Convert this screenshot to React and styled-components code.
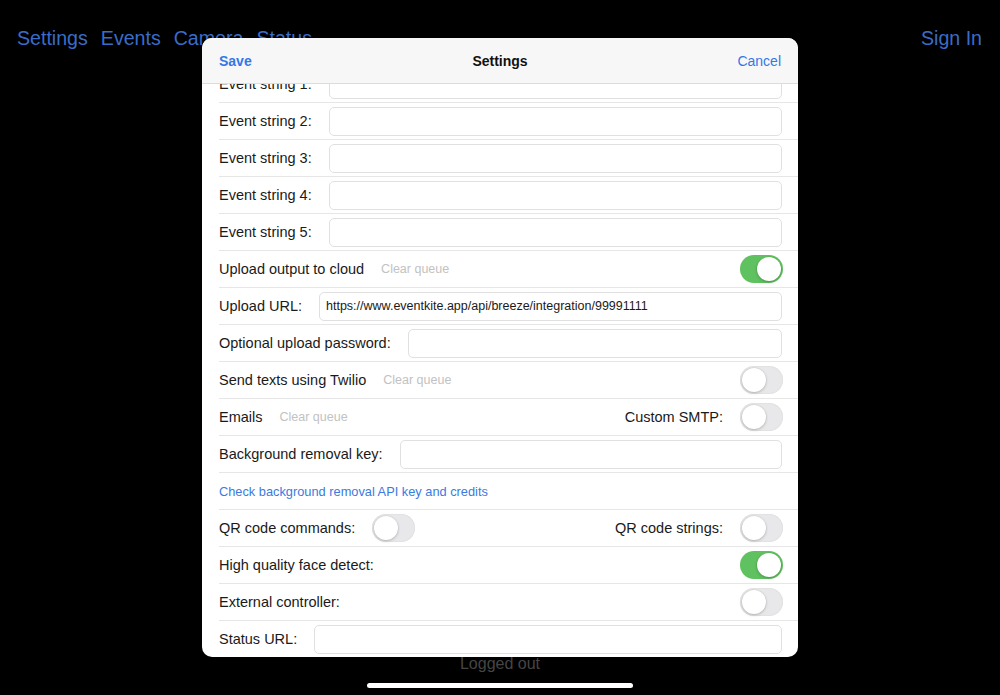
import React, { useLayoutEffect, useRef } from "react";
import styled, { createGlobalStyle } from "styled-components";

const Global = createGlobalStyle`
  html, body { margin: 0; padding: 0; background: #000; }
  body { font-family: "Liberation Sans", Arial, sans-serif; -webkit-font-smoothing: antialiased; }
  * { box-sizing: border-box; }
`;

const Page = styled.div`
  position: relative;
  width: 1000px;
  height: 695px;
  background: #000;
  display: flex;
  flex-direction: column;
  overflow: hidden;
`;

const Nav = styled.nav`
  display: flex;
  align-items: center;
  padding: 26px 18px 0 17px;
  height: 50px;
`;

const NavLink = styled.span`
  color: #3a6cc9;
  font-size: 19.6px;
  line-height: 24px;
  margin-right: ${(p) => (p.$last ? "0" : "13px")};
`;

const NavSpacer = styled.div`
  flex: 1;
`;

const Filler = styled.div`
  flex: 1;
`;

const Status = styled.div`
  text-align: center;
  color: #454545;
  font-size: 16px;
  line-height: 20px;
`;

const HomeBar = styled.div`
  align-self: center;
  width: 266px;
  height: 5px;
  border-radius: 3px;
  background: #fff;
  margin: 9px 0 7px;
`;

const Sheet = styled.div`
  position: absolute;
  top: 38px;
  left: 202px;
  width: 596px;
  height: 619px;
  background: #fff;
  border-radius: 10px;
  overflow: hidden;
  display: flex;
  flex-direction: column;
`;

const SheetHeader = styled.header`
  height: 46px;
  flex: none;
  background: #f7f7f7;
  border-bottom: 1px solid #dcdcdc;
  display: grid;
  grid-template-columns: 1fr auto 1fr;
  align-items: center;
  padding: 0 17px;
`;

const HeaderButton = styled.span`
  color: #3478e8;
  font-size: 14px;
  font-weight: ${(p) => (p.$bold ? 600 : 400)};
  justify-self: ${(p) => (p.$end ? "end" : "start")};
`;

const HeaderTitle = styled.span`
  font-size: 14px;
  font-weight: 700;
  color: #111;
`;

const Body = styled.div`
  flex: 1;
  overflow-y: auto;
  scrollbar-width: none;
  &::-webkit-scrollbar { display: none; }
`;

const Row = styled.div`
  height: 37px;
  margin-left: 17px;
  padding-right: 16px;
  border-bottom: 1px solid #e6e6e6;
  display: flex;
  align-items: center;
  gap: 17px;
`;

const Label = styled.span`
  font-size: 14.5px;
  color: #1a1a1a;
  white-space: nowrap;
  flex: none;
`;

const Grow = styled.div`
  flex: 1;
`;

const Input = styled.div`
  flex: 1;
  height: 29px;
  border: 1px solid #e0e0e0;
  border-radius: 5px;
  display: flex;
  align-items: center;
  padding: 0 6px;
  font-size: 12.5px;
  color: #1a1a1a;
  white-space: nowrap;
  overflow: hidden;
`;

const Muted = styled.span`
  font-size: 12.5px;
  color: #c2c2c2;
  white-space: nowrap;
`;

const Link = styled.span`
  font-size: 12.8px;
  color: #3a7be0;
  white-space: nowrap;
`;

const Toggle = styled.span`
  position: relative;
  flex: none;
  width: 43px;
  height: 28px;
  border-radius: 14px;
  background: ${(p) => (p.$on ? "#5fc15f" : "#e8e8ea")};
  box-shadow: ${(p) => (p.$on ? "none" : "inset 0 0 0 1px #e2e2e2")};
  margin-right: -1px;
  &::after {
    content: "";
    position: absolute;
    top: 2px;
    left: ${(p) => (p.$on ? "17px" : "2px")};
    width: 24px;
    height: 24px;
    border-radius: 50%;
    background: #fff;
    box-shadow: 0 1px 3px rgba(0, 0, 0, 0.22), 0 0 0 0.5px rgba(0, 0, 0, 0.06);
  }
`;

function FieldRow({ label, value }) {
  return (
    <Row>
      <Label>{label}</Label>
      <Input>{value}</Input>
    </Row>
  );
}

export default function App() {
  const bodyRef = useRef(null);
  useLayoutEffect(() => {
    if (bodyRef.current) bodyRef.current.scrollTop = 18;
  }, []);

  return (
    <Page>
      <Global />
      <Nav>
        <NavLink>Settings</NavLink>
        <NavLink>Events</NavLink>
        <NavLink>Camera</NavLink>
        <NavLink>Status</NavLink>
        <NavSpacer />
        <NavLink $last>Sign In</NavLink>
      </Nav>
      <Filler />
      <Status>Logged out</Status>
      <HomeBar />

      <Sheet>
        <SheetHeader>
          <HeaderButton $bold>Save</HeaderButton>
          <HeaderTitle>Settings</HeaderTitle>
          <HeaderButton $end>Cancel</HeaderButton>
        </SheetHeader>
        <Body ref={bodyRef}>
          <FieldRow label="Event string 1:" />
          <FieldRow label="Event string 2:" />
          <FieldRow label="Event string 3:" />
          <FieldRow label="Event string 4:" />
          <FieldRow label="Event string 5:" />
          <Row>
            <Label>Upload output to cloud</Label>
            <Muted>Clear queue</Muted>
            <Grow />
            <Toggle $on />
          </Row>
          <FieldRow
            label="Upload URL:"
            value="https://www.eventkite.app/api/breeze/integration/99991111"
          />
          <FieldRow label="Optional upload password:" />
          <Row>
            <Label>Send texts using Twilio</Label>
            <Muted>Clear queue</Muted>
            <Grow />
            <Toggle />
          </Row>
          <Row>
            <Label>Emails</Label>
            <Muted>Clear queue</Muted>
            <Grow />
            <Label>Custom SMTP:</Label>
            <Toggle />
          </Row>
          <FieldRow label="Background removal key:" />
          <Row>
            <Link>Check background removal API key and credits</Link>
          </Row>
          <Row>
            <Label>QR code commands:</Label>
            <Toggle />
            <Grow />
            <Label>QR code strings:</Label>
            <Toggle />
          </Row>
          <Row>
            <Label>High quality face detect:</Label>
            <Grow />
            <Toggle $on />
          </Row>
          <Row>
            <Label>External controller:</Label>
            <Grow />
            <Toggle />
          </Row>
          <FieldRow label="Status URL:" />
        </Body>
      </Sheet>
    </Page>
  );
}
